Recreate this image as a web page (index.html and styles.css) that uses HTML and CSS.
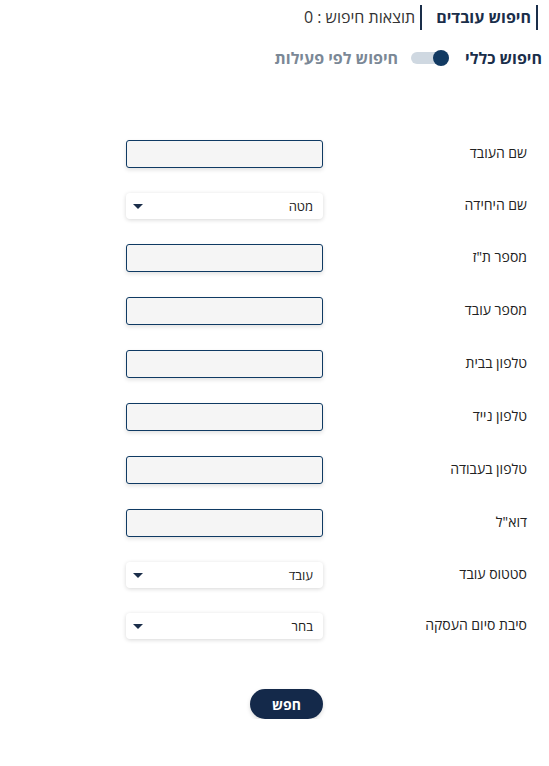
FILE: index.html
```html
<!DOCTYPE html>
<html lang="he" dir="rtl">
<head>
  <meta charset="UTF-8">
  <title>חיפוש עובדים</title>
  <link rel="stylesheet" href="styles.css">
</head>
<body>
  <header class="top">
    <h1 class="title">חיפוש עובדים</h1>
    <span class="results">תוצאות חיפוש : 0</span>
  </header>

  <div class="mode">
    <span class="mode-on">חיפוש כללי</span>
    <span class="switch"><span class="knob"></span></span>
    <span class="mode-off">חיפוש לפי פעילות</span>
  </div>

  <form class="search">
    <label for="name">שם העובד</label>
    <input type="text" id="name">

    <label>שם היחידה</label>
    <div class="select"><span>מטה</span><svg width="10" height="5" viewBox="0 0 10 5"><path d="M0 0h10L5 5z" fill="#1b2e4a"/></svg></div>

    <label for="tz">מספר ת"ז</label>
    <input type="text" id="tz">

    <label for="num">מספר עובד</label>
    <input type="text" id="num">

    <label for="home">טלפון בבית</label>
    <input type="text" id="home">

    <label for="mobile">טלפון נייד</label>
    <input type="text" id="mobile">

    <label for="work">טלפון בעבודה</label>
    <input type="text" id="work">

    <label for="mail">דוא"ל</label>
    <input type="text" id="mail">

    <label>סטטוס עובד</label>
    <div class="select"><span>עובד</span><svg width="10" height="5" viewBox="0 0 10 5"><path d="M0 0h10L5 5z" fill="#1b2e4a"/></svg></div>

    <label>סיבת סיום העסקה</label>
    <div class="select"><span>בחר</span><svg width="10" height="5" viewBox="0 0 10 5"><path d="M0 0h10L5 5z" fill="#1b2e4a"/></svg></div>

    <span></span>
    <div><button type="submit">חפש</button></div>
  </form>
</body>
</html>
```

FILE: styles.css
```css
body {
  margin: 0;
  font-family: 'Open Sans', 'DejaVu Sans', sans-serif;
  color: #222;
  background: #fff;
}
.top {
  display: flex;
  align-items: center;
  padding: 5px 11px 0 0;
}
.title {
  margin: 0;
  font-size: 16px;
  font-weight: 700;
  color: #1a2e4a;
  border-right: 2px solid #1a2e4a;
  padding-right: 5px;
  line-height: 25px;
}
.results {
  font-size: 16px;
  color: #333;
  border-right: 2px solid #1a2e4a;
  padding-right: 5px;
  margin-right: 14px;
  line-height: 25px;
}
.mode {
  display: flex;
  align-items: center;
  padding: 17px 7px 0 0;
  font-size: 16px;
  font-weight: 700;
}
.mode-on { color: #1a2e4a; }
.mode-off { color: #7b8896; }
.switch {
  position: relative;
  width: 38px;
  height: 12px;
  border-radius: 6px;
  background: #cfd8e1;
  margin: 0 16px 0 13px;
}
.knob {
  position: absolute;
  right: 0;
  top: -2px;
  width: 16px;
  height: 16px;
  border-radius: 50%;
  background: #123a62;
}
.search {
  display: grid;
  grid-template-columns: 204px 197px;
  row-gap: 25px;
  align-items: center;
  margin-top: 71px;
  padding-right: 22px;
}
.search label {
  font-size: 14px;
  color: #222;
  padding-bottom: 3px;
}
.search input {
  box-sizing: border-box;
  width: 197px;
  height: 28px;
  margin: 0;
  border: 1px solid #0f3a63;
  border-radius: 3px;
  background: #f5f5f5;
  box-shadow: 0 2px 4px rgba(0,0,0,0.12);
}
.select {
  box-sizing: border-box;
  height: 26px;
  display: flex;
  align-items: center;
  justify-content: space-between;
  padding: 0 10px 0 7px;
  background: #fff;
  border-radius: 4px;
  box-shadow: 0 1px 4px rgba(0,0,0,0.16);
  font-size: 13px;
  color: #222;
}
.search button {
  margin-top: 25px;
  width: 73px;
  height: 30px;
  border: none;
  border-radius: 15px;
  background: #14294a;
  color: #fff;
  font-family: inherit;
  font-size: 14px;
  font-weight: 700;
  box-shadow: 0 2px 4px rgba(0,0,0,0.15);
  cursor: pointer;
}
```
